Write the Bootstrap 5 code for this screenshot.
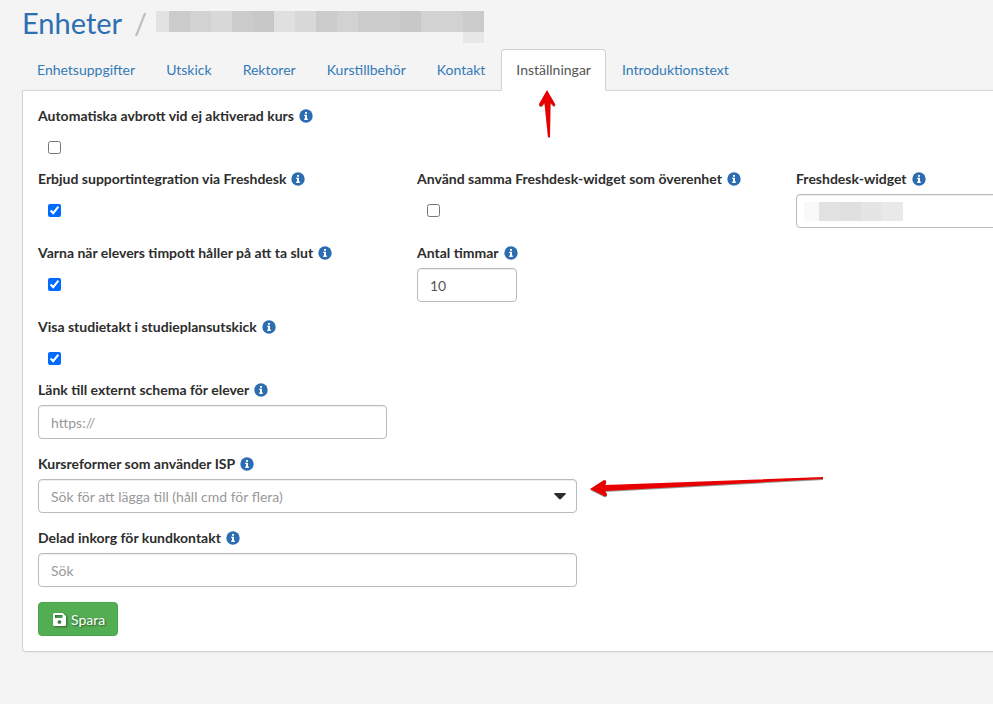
<!DOCTYPE html>
<html lang="sv">
<head>
<meta charset="utf-8">
<meta name="viewport" content="width=device-width, initial-scale=1">
<title>Enheter – Inställningar</title>
<link href="https://cdn.jsdelivr.net/npm/bootstrap@5.3.0/dist/css/bootstrap.min.css" rel="stylesheet">
<style>
  body { background: #f4f4f4; color: #2d2d2d; font: 14px/20px Lato, "Liberation Sans", sans-serif; }
  a { color: #337ab7; text-decoration: none; }
  .page-shell { min-width: 1184px; padding: 5px 22px 52px; }
  .page-shell > * { max-width: 1139px; }
  .page-title { height: 44px; font-size: 29px; line-height: 36px; font-weight: 400; margin: 0; }
  .page-title a { color: #2c6fb2; }
  .divider { color: #bbb; padding: 0 9px 0 12px; }
  .masked { display: flex; }
  .masked-title { padding-top: 6px; }
  .masked span { width: 21px; height: 21px; }
  .masked span:first-child { width: 13px; }
  .masked .tail { height: 32px; background: linear-gradient(#cbcbcb 21px, #e7e7e7 21px); }
  .m1 { background: #e2e2e2; } .m2 { background: #cbcbcb; } .m3 { background: #d2d2d2; } .m4 { background: #c8c8c8; }
  .m5 { background: #e0e0e0; } .m6 { background: #d8d8d8; } .m7 { background: #e5e5e5; } .m8 { background: #e9e9e9; } .m9 { background: #f9f9f9; }
  .nav-tabs { gap: 1px; border: 0; margin-bottom: -1px; position: relative; z-index: 1; }
  .nav-tabs .nav-link { padding: 10px 14px; margin: 0; border-radius: 4px 4px 0 0; color: #337ab7; line-height: 20px; }
  .nav-tabs .nav-link.active { color: #555; border-color: #d2d2d2 #d2d2d2 #fff; }
  .panel { background: #fff; border: 1px solid #d2d2d2; border-radius: 0 0 4px 4px; padding: 15px; box-shadow: 0 1px 1px rgba(0,0,0,.05); }
  .panel .row { --bs-gutter-x: 30px; }
  .field { margin-bottom: 15px; }
  .field-head { display: flex; align-items: center; gap: 5px; height: 20px; margin-bottom: 5px; }
  .field-head label { font-weight: 700; white-space: nowrap; }
  .info { width: 14px; height: 14px; flex: none; }
  .tick { height: 23px; padding: 10px 0 0 10px; }
  .tick input { display: block; width: 13px; height: 13px; margin: 0; accent-color: #006aff; }
  .form-control, .form-select { height: 34px; padding: 6px 12px; font-size: 14px; line-height: 20px; color: #555; border: 1px solid #bbb; border-radius: 4px; background: #fff; box-shadow: inset 0 1px 1px rgba(0,0,0,.075); }
  .form-select { padding-top: 7px; padding-bottom: 5px; }
  .form-select, .form-control::placeholder { color: #999; }
  .hours { width: 100px; }
  .caret { position: absolute; right: 11px; top: 14px; pointer-events: none; }
  .masked-value { position: absolute; left: 8px; top: 8px; pointer-events: none; }
  .masked-value span { height: 19px; }
  .masked-value span:first-child { width: 15px; }
  .btn-save { display: inline-flex; align-items: center; gap: 5px; height: 34px; padding: 0 12px 0 14px; border: 1px solid #48a648; border-radius: 4px; background: #53ae53; color: #fff; font-size: 14px; text-shadow: 1px 1px 2px rgba(0,0,0,.5); }
  .btn-save:hover { background: #449d44; color: #fff; }
  .btn-save svg { filter: drop-shadow(1px 1px 1px rgba(0,0,0,.45)); }
  .pointer-up { position: absolute; left: 36px; top: 40px; z-index: 2; pointer-events: none; }
  .pointer-left { position: absolute; left: 100%; top: -5px; pointer-events: none; }
</style>
<script src="https://cdn.jsdelivr.net/npm/bootstrap@5.3.0/dist/js/bootstrap.bundle.min.js"></script>
</head>
<body>
<svg width="0" height="0" class="d-none" aria-hidden="true">
  <symbol id="info" viewBox="0 0 14 14"><circle cx="7" cy="7" r="6.7" fill="#2b6db0"/><path d="M6 3h2v1.700H6zM5.200 5.700H8v3.800h.8v1.400H5.200V9.500H6V7.100h-.8z" fill="#fff"/></symbol>
</svg>
<div class="overflow-hidden">
<main class="page-shell">
  <h1 class="page-title d-flex">
    <a href="#">Enheter</a><span class="divider">/</span>
    <span class="masked masked-title" aria-hidden="true"><span class="m1"></span><span class="m2"></span><span class="m3"></span><span class="m6"></span><span class="m2"></span><span class="m4"></span><span class="m5"></span><span class="m6"></span><span class="m2"></span><span class="m3"></span><span class="m2"></span><span class="m2"></span><span class="m4"></span><span class="m3"></span><span class="m3"></span><span class="tail"></span></span>
  </h1>
  <ul class="nav nav-tabs">
    <li class="nav-item"><a class="nav-link" href="#">Enhetsuppgifter</a></li>
    <li class="nav-item"><a class="nav-link" href="#">Utskick</a></li>
    <li class="nav-item"><a class="nav-link" href="#">Rektorer</a></li>
    <li class="nav-item"><a class="nav-link" href="#">Kurstillbehör</a></li>
    <li class="nav-item"><a class="nav-link" href="#">Kontakt</a></li>
    <li class="nav-item position-relative"><a class="nav-link active" aria-current="page" href="#">Inställningar</a>
      <svg class="pointer-up" width="22" height="52" viewBox="0 0 22 52" aria-hidden="true"><path d="M10 1 2 15q0 3 3 2l2.500-3 3.500 34h2l.5-34 3 3q3 0 1-3z" fill="#555" opacity=".5" transform="translate(0 1)"/><path d="M10 1 2 15q0 3 3 2l2.500-3 3.500 34h2l.5-34 3 3q3 0 1-3z" fill="#e80000"/></svg>
    </li>
    <li class="nav-item"><a class="nav-link" href="#">Introduktionstext</a></li>
  </ul>
  <form class="panel">
    <div class="field">
      <div class="field-head"><label for="abort">Automatiska avbrott vid ej aktiverad kurs</label><svg class="info"><use href="#info"/></svg></div>
      <div class="tick"><input type="checkbox" id="abort"></div>
    </div>
    <div class="row">
      <div class="col-4 field">
        <div class="field-head"><label for="support">Erbjud supportintegration via Freshdesk</label><svg class="info"><use href="#info"/></svg></div>
        <div class="tick"><input type="checkbox" id="support" checked></div>
      </div>
      <div class="col-4 field">
        <div class="field-head"><label for="same">Använd samma Freshdesk-widget som överenhet</label><svg class="info"><use href="#info"/></svg></div>
        <div class="tick"><input type="checkbox" id="same"></div>
      </div>
      <div class="col-4 field">
        <div class="field-head"><label for="widget">Freshdesk-widget</label><svg class="info"><use href="#info"/></svg></div>
        <div class="position-relative"><input type="text" class="form-control" id="widget">
          <span class="masked masked-value" aria-hidden="true"><span class="m9"></span><span class="m1"></span><span class="m5"></span><span class="m7"></span><span class="m8"></span></span></div>
      </div>
    </div>
    <div class="row">
      <div class="col-4 field">
        <div class="field-head"><label for="warn">Varna när elevers timpott håller på att ta slut</label><svg class="info"><use href="#info"/></svg></div>
        <div class="tick"><input type="checkbox" id="warn" checked></div>
      </div>
      <div class="col-4 field">
        <div class="field-head"><label for="hours">Antal timmar</label><svg class="info"><use href="#info"/></svg></div>
        <input type="text" class="form-control hours" id="hours" value="10">
      </div>
    </div>
    <div class="field">
      <div class="field-head"><label for="pace">Visa studietakt i studieplansutskick</label><svg class="info"><use href="#info"/></svg></div>
      <div class="tick"><input type="checkbox" id="pace" checked></div>
    </div>
    <div class="row">
      <div class="col-4 field">
        <div class="field-head"><label for="schema">Länk till externt schema för elever</label><svg class="info"><use href="#info"/></svg></div>
        <input type="url" class="form-control" id="schema" placeholder="https://">
      </div>
    </div>
    <div class="row">
      <div class="col-6 field">
        <div class="field-head"><label for="isp">Kursreformer som använder ISP</label><svg class="info"><use href="#info"/></svg></div>
        <div class="position-relative">
          <select class="form-select" id="isp"><option>Sök för att lägga till (håll cmd för flera)</option></select>
          <svg class="caret" width="12" height="7" viewBox="0 0 12 7" aria-hidden="true"><path d="M.8 0h10.4q1 .3.3 1.2L7 6.1q-1 .8-2 0L.5 1.2Q-.2.3.8 0z" fill="#2d2d2d"/></svg>
          <svg class="pointer-left" width="250" height="30" viewBox="0 0 250 30" aria-hidden="true"><path d="m13 15 14-9q3 0 2 3l-1 2 218-8v2L28 17l2 3q0 3-3 2z" fill="#444" opacity=".55" transform="translate(0 1)"/><path d="m13 15 14-9q3 0 2 3l-1 2 218-8v2L28 17l2 3q0 3-3 2z" fill="#e80000"/></svg>
        </div>
      </div>
    </div>
    <div class="row">
      <div class="col-6 field">
        <div class="field-head"><label for="inbox">Delad inkorg för kundkontakt</label><svg class="info"><use href="#info"/></svg></div>
        <input type="text" class="form-control" id="inbox" placeholder="Sök">
      </div>
    </div>
    <button type="button" class="btn btn-save"><svg width="13" height="13" viewBox="0 0 13 13" aria-hidden="true"><path fill="#fff" fill-rule="evenodd" d="M1.3 0h8.5L13 3.2v8.5q0 1.3-1.3 1.3H1.3Q0 13 0 11.700V1.300Q0 0 1.300 0zM2 2v3h7.500V2zM6.500 7.200a1.900 1.900 0 1 0 .01 0z"/></svg>Spara</button>
  </form>
</main>
</div>
</body>
</html>
